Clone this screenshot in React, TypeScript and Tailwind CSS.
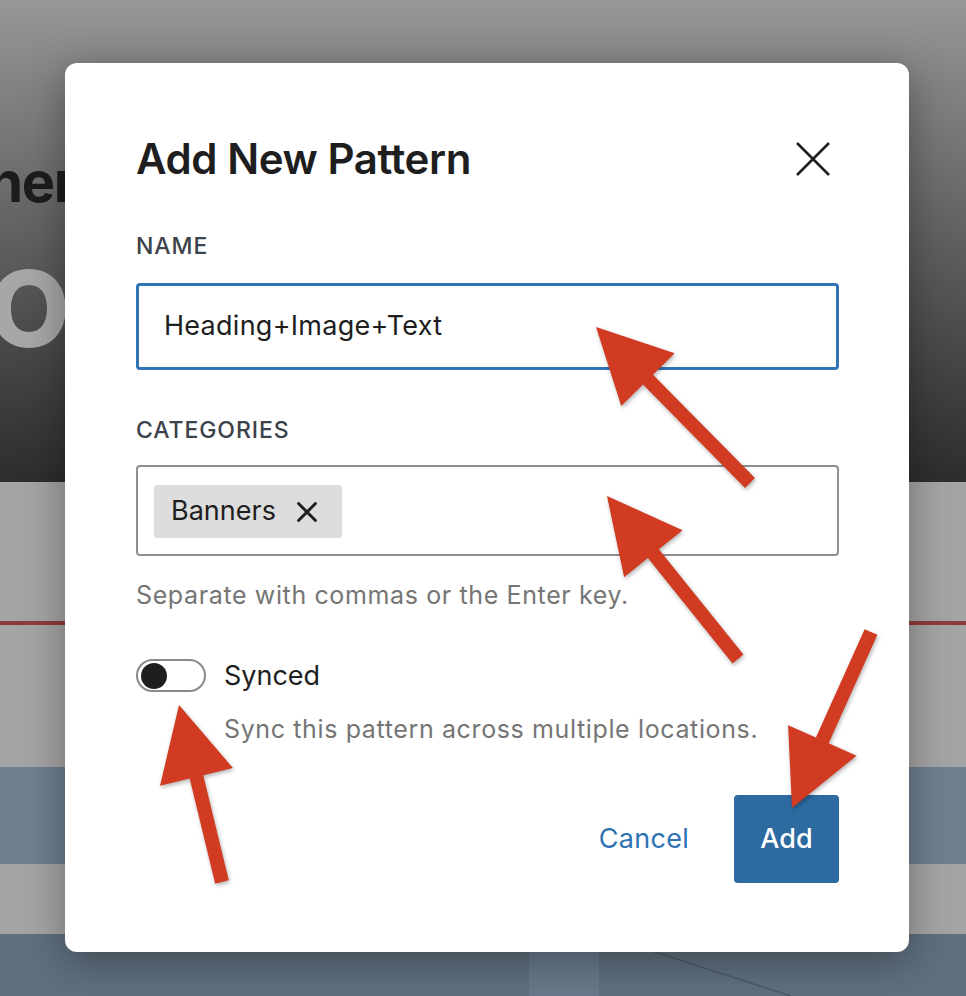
import React from "react";

type Pt = [number, number];

interface Arrow {
  tip: Pt;
  tail: Pt;
}

// annotation arrows drawn over the screenshot
const arrows: Arrow[] = [
  { tip: [596, 327], tail: [750, 483] },
  { tip: [607, 496], tail: [738, 659] },
  { tip: [179, 705], tail: [222, 882] },
  { tip: [792, 808], tail: [871, 632] },
];

function arrowPoints({ tip, tail }: Arrow, head = 74, half = 37.5, shaft = 7) {
  const dx = tip[0] - tail[0];
  const dy = tip[1] - tail[1];
  const len = Math.hypot(dx, dy);
  const ux = dx / len;
  const uy = dy / len;
  const nx = -uy;
  const ny = ux;
  const bx = tip[0] - ux * head;
  const by = tip[1] - uy * head;
  const pts: Pt[] = [
    tip,
    [bx + nx * half, by + ny * half],
    [bx + nx * shaft, by + ny * shaft],
    [tail[0] + nx * shaft, tail[1] + ny * shaft],
    [tail[0] - nx * shaft, tail[1] - ny * shaft],
    [bx - nx * shaft, by - ny * shaft],
    [bx - nx * half, by - ny * half],
  ];
  return pts.map((p) => p.join(",")).join(" ");
}

function CloseIcon({ className, weight = 2.6 }: { className?: string; weight?: number }) {
  return (
    <svg viewBox="0 0 34 34" className={className} fill="none" stroke="currentColor" strokeWidth={weight}>
      <path d="M1 1L33 33M33 1L1 33" />
    </svg>
  );
}

function Backdrop() {
  return (
    <div className="flex flex-col">
      <div className="h-[482px] bg-gradient-to-b from-[#979797] to-[#2d2d2d] overflow-hidden pt-[152px]">
        <div className="-ml-[58px] text-[56px] font-bold leading-[60px] text-[#1c1c1c] tracking-tight">where</div>
        <div className="-ml-[12px] mt-[44px] text-[106px] font-extrabold leading-[106px] text-[#a7a7a7]">O</div>
      </div>
      <div className="h-[285px] bg-[#a4a4a4] pt-[139px]">
        <div className="h-[4px] bg-[#8e3b3b]" />
      </div>
      <div className="h-[97px] bg-[#6e7f8e]" />
      <div className="h-[70px] bg-[#a4a4a4]" />
      <div className="h-[62px] bg-[#5f6f7e] flex">
        <div className="w-[529px]" />
        <div className="w-[70px] bg-[#687989]" />
        <svg className="flex-1 h-full" viewBox="0 0 367 62" preserveAspectRatio="none">
          <line x1="0" y1="0" x2="192" y2="62" stroke="#4b5967" strokeWidth="1.5" />
        </svg>
      </div>
    </div>
  );
}

function Toggle() {
  return (
    <div className="w-[70px] h-[33px] rounded-full border-2 border-[#8a8a8a] bg-white flex items-center pl-[3px]">
      <div className="w-[26px] h-[26px] rounded-full bg-[#1e1e1e]" />
    </div>
  );
}

export default function App() {
  return (
    <div className="relative w-[966px] h-[996px] overflow-hidden" style={{ fontFamily: "Inter, 'Noto Sans', sans-serif" }}>
      <Backdrop />

      <div className="absolute left-[65px] top-[63px] w-[844px] h-[889px] bg-white rounded-[12px] shadow-[0_8px_40px_rgba(0,0,0,0.35)]">
        <div className="pl-[71px] pr-[70px] pt-[74px]">
          <div className="flex items-center justify-between h-[44px]">
            <h1 className="text-[42px] leading-[44px] font-semibold text-[#1e1e1e] tracking-[-0.01em]">Add New Pattern</h1>
            <CloseIcon className="w-[34px] h-[34px] mr-[9px] text-[#1e1e1e]" />
          </div>

          <div className="mt-[54px] text-[23px] leading-[22px] font-medium tracking-[0.04em] text-[#3c434a]">NAME</div>
          <div className="mt-[26px] h-[87px] rounded-[4px] border-[3px] border-[#3174b6] flex items-center pl-[25px] text-[27px] tracking-[0.01em] text-[#1e1e1e]">
            Heading+Image+Text
          </div>

          <div className="mt-[49px] text-[23px] leading-[22px] font-medium tracking-[0.04em] text-[#3c434a]">CATEGORIES</div>
          <div className="mt-[24px] h-[91px] rounded-[4px] border-2 border-[#8c8f94] pt-[18px] pl-[16px]">
            <div className="inline-flex items-center h-[53px] w-[188px] bg-[#dddddd] rounded-[3px] pl-[17px] gap-[21px] text-[27px] text-[#1e1e1e]">
              <span>Banners</span>
              <CloseIcon className="w-[20px] h-[20px] text-[#1e1e1e]" weight={5} />
            </div>
          </div>

          <p className="mt-[27px] text-[25px] leading-[24px] tracking-[0.025em] text-[#757575]">Separate with commas or the Enter key.</p>

          <div className="mt-[52px] flex items-center gap-[18px]">
            <Toggle />
            <span className="text-[27px] leading-[33px] text-[#1e1e1e]">Synced</span>
          </div>
          <p className="mt-[25px] pl-[88px] text-[25px] leading-[24px] tracking-[0.025em] text-[#757575]">Sync this pattern across multiple locations.</p>

          <div className="mt-[54px] flex items-center justify-end gap-[45px]">
            <button className="text-[27px] tracking-[0.01em] text-[#2f72b4]">Cancel</button>
            <button className="w-[105px] h-[88px] rounded-[4px] bg-[#2c6a9f] text-white text-[27px] font-medium">Add</button>
          </div>
        </div>
      </div>

      <svg className="absolute inset-0 w-[966px] h-[996px] pointer-events-none drop-shadow-[1px_2px_2px_rgba(0,0,0,0.3)]" viewBox="0 0 966 996">
        {arrows.map((a, i) => (
          <polygon key={i} points={arrowPoints(a)} fill="#d13b21" />
        ))}
      </svg>
    </div>
  );
}
